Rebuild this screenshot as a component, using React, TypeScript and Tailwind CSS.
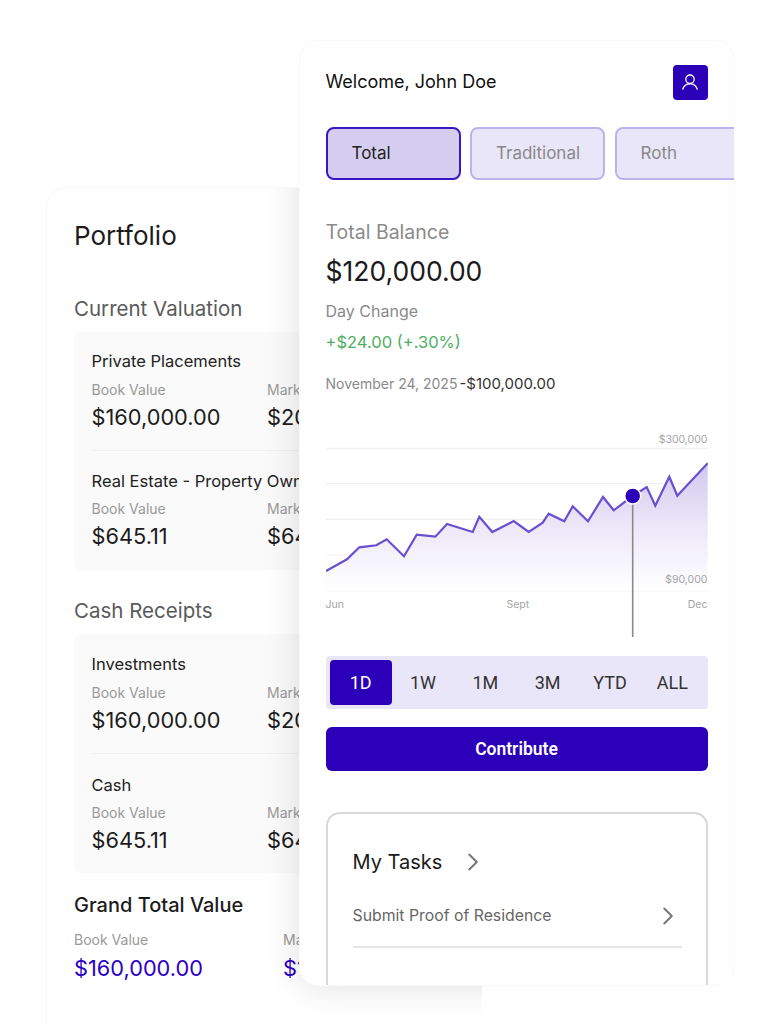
import React from 'react';
import { ChevronRight } from 'lucide-react';

const chartPoints = [
  [0, 139], [21, 127.3], [33.3, 115.3], [50.3, 113.3], [60.7, 107.3], [78, 124.3], [90.7, 102.7],
  [109.3, 104.7], [121, 92], [146.7, 100], [153.3, 84.7], [166.3, 100], [187.7, 89], [202.7, 100],
  [216.7, 90.7], [222.7, 81.7], [238.3, 89.3], [246.7, 74.3], [262, 89.3], [277, 65], [287.7, 78.3],
  [306.7, 64], [320.7, 55], [329.3, 73.7], [343.3, 44.7], [351.3, 63.7], [381.7, 31.3],
];
const gridLines = [16.3, 51.7, 87.3, 123, 158.7];
const ranges = ['1D', '1W', '1M', '3M', 'YTD', 'ALL'];

function Holding({ title, book, market, tight }: { title: string; book: string; market: string; tight?: boolean }) {
  return (
    <div className="pl-[17.5px]">
      <div className="text-[16.5px] leading-[20px] text-[#222]">{title}</div>
      <div className={tight ? 'mt-[8px] flex' : 'mt-[9px] flex'}>
        <div className="w-[175.5px] shrink-0">
          <div className="text-[14px] leading-[20px] text-[#999]">Book Value</div>
          <div className="mt-[3px] text-[21.75px] leading-[28px] text-[#1c1c1c]">{book}</div>
        </div>
        <div className="shrink-0">
          <div className="text-[14px] leading-[20px] text-[#999]">Market Value</div>
          <div className="mt-[3px] text-[21.75px] leading-[28px] text-[#1c1c1c]">{market}</div>
        </div>
      </div>
    </div>
  );
}

function PortfolioCard() {
  return (
    <div className="absolute left-[46px] top-[187px] h-[837px] w-[436px] overflow-hidden rounded-t-[20px] border-l border-t border-[#f8f8f8] bg-white pl-[27px] pt-[30px]">
      <div className="whitespace-nowrap text-[26px] leading-[36px] text-[#1c1c1c]">Portfolio</div>
      <div className="mt-[41px] text-[20.5px] leading-[28px] text-[#5a5a5a]">Current Valuation</div>
      <div className="mt-[9px] h-[238px] w-[360px] overflow-hidden rounded-[6px] bg-[#fafafa] pt-[19px] whitespace-nowrap">
        <Holding title="Private Placements" book="$160,000.00" market="$200,000.00" />
        <div className="ml-[17px] mt-[19px] h-px bg-[#f2f2f2]" />
        <div className="mt-[20px]">
          <Holding title="Real Estate - Property Owner" book="$645.11" market="$645.11" tight />
        </div>
      </div>
      <div className="mt-[27px] text-[20.5px] leading-[28px] text-[#5a5a5a]">Cash Receipts</div>
      <div className="mt-[9px] h-[239px] w-[360px] overflow-hidden rounded-[6px] bg-[#fafafa] pt-[20px] whitespace-nowrap">
        <Holding title="Investments" book="$160,000.00" market="$200,000.00" />
        <div className="ml-[17px] mt-[19px] h-px bg-[#f2f2f2]" />
        <div className="mt-[21px]">
          <Holding title="Cash" book="$645.11" market="$645.11" tight />
        </div>
      </div>
      <div className="mt-[18px] text-[20px] font-medium leading-[28px] text-[#1c1c1c]">Grand Total Value</div>
      <div className="mt-[11px] flex whitespace-nowrap">
        <div className="w-[209px] shrink-0">
          <div className="text-[14px] leading-[20px] text-[#999]">Book Value</div>
          <div className="mt-[3px] text-[21.75px] leading-[30px] text-[#2a00c4]">$160,000.00</div>
        </div>
        <div className="shrink-0">
          <div className="text-[14px] leading-[20px] text-[#999]">Market Value</div>
          <div className="mt-[3px] text-[21.75px] leading-[30px] text-[#2a00c4]">$160,000.00</div>
        </div>
      </div>
      {/* the front card's shadow only shows where it falls on this card */}
      <div className="absolute left-[252px] top-[-148px] h-[946px] w-[436px] rounded-[20px] shadow-[0_0_36px_rgba(0,0,0,0.13)]" />
    </div>
  );
}

function BalanceChart() {
  const line = chartPoints.map(([x, y]) => `${x},${y}`).join(' ');
  return (
    <div className="relative mt-[36px] h-[208px] w-[382px]">
      <svg viewBox="0 0 382 208" className="h-[208px] w-[382px]">
        <defs>
          <linearGradient id="chartFill" x1="0" y1="0" x2="0" y2="1">
            <stop offset="0" stopColor="#d0c8ef" />
            <stop offset="0.5" stopColor="#ece8f8" />
            <stop offset="1" stopColor="#ffffff" />
          </linearGradient>
        </defs>
        {gridLines.map((y) => (
          <line key={y} x1="0" x2="382" y1={y} y2={y} stroke="#f0f0f0" strokeWidth="1.2" />
        ))}
        <polygon points={`0,158.7 ${line} 381.7,158.7`} fill="url(#chartFill)" />
        <polyline points={line} fill="none" stroke="#6a4fd0" strokeWidth="2.2" strokeLinejoin="miter" />
        <line x1="306.7" x2="306.7" y1="64" y2="205" stroke="#8a8a8a" strokeWidth="1.6" />
        <circle cx="306.7" cy="64" r="8" fill="#2c00b8" stroke="#ffffff" strokeWidth="1.5" />
      </svg>
      <span className="absolute right-0 top-[1px] text-[10.5px] leading-[14px] text-[#a5a5a5]">$300,000</span>
      <span className="absolute right-0 top-[141px] text-[10.5px] leading-[14px] text-[#a5a5a5]">$90,000</span>
      <span className="absolute left-0 top-[166px] text-[10.5px] leading-[14px] text-[#a5a5a5]">Jun</span>
      <span className="absolute left-[181px] top-[166px] text-[10.5px] leading-[14px] text-[#a5a5a5]">Sept</span>
      <span className="absolute right-0 top-[166px] text-[10.5px] leading-[14px] text-[#a5a5a5]">Dec</span>
    </div>
  );
}

function AccountCard() {
  return (
    <div className="absolute left-[299px] top-[40px] h-[946px] w-[436px] overflow-hidden rounded-[20px] border border-[#fafafa] bg-white pl-[25.5px] pt-[23px]">
      <div className="flex w-[382px] items-center justify-between">
        <div className="text-[18px] leading-[36px] text-[#111]">Welcome, John Doe</div>
        <div className="flex h-[35px] w-[35px] items-center justify-center rounded-[4px] bg-[#2c00b8]">
          <svg viewBox="0 0 18 18" className="h-[18px] w-[18px]" fill="none" stroke="#ffffff" strokeWidth="1.3" strokeLinecap="round">
            <circle cx="9" cy="6.2" r="4.2" />
            <path d="M1.8 16.2c.9-3.2 3.6-5.4 7.2-5.4s6.3 2.2 7.2 5.4" />
          </svg>
        </div>
      </div>
      <div className="mt-[27px] flex gap-[9.5px]">
        <div className="flex h-[53px] w-[135px] shrink-0 items-center rounded-[8px] border-2 border-[#3a17c4] bg-[#d4cdf0] pl-[24px] text-[17px] text-[#222]">Total</div>
        <div className="flex h-[53px] w-[135px] shrink-0 items-center rounded-[8px] border-2 border-[#bdb2ec] bg-[#eae6f9] pl-[24px] text-[17px] text-[#888]">Traditional</div>
        <div className="flex h-[53px] w-[135px] shrink-0 items-center rounded-[8px] border-2 border-[#bdb2ec] bg-[#eae6f9] pl-[24px] text-[17px] text-[#888]">Roth</div>
      </div>
      <div className="mt-[38px] text-[19.5px] leading-[28px] text-[#8a8a8a]">Total Balance</div>
      <div className="mt-[8px] text-[26.5px] leading-[34px] text-[#1a1a1a]">$120,000.00</div>
      <div className="mt-[11px] text-[16px] leading-[24px] text-[#8a8a8a]">Day Change</div>
      <div className="mt-[7px] text-[16.5px] leading-[24px] text-[#4caf62]">+$24.00 (+.30%)</div>
      <div className="mt-[18px] flex items-center gap-[2px] leading-[24px]">
        <span className="text-[14px] text-[#8a8a8a]">November 24, 2025</span>
        <span className="text-[15px] text-[#333]">-$100,000.00</span>
      </div>
      <BalanceChart />
      <div className="mt-[16px] grid h-[53px] w-[382px] grid-cols-6 items-center rounded-[4px] bg-[#eae6f9] px-[4px] font-['Roboto',sans-serif] text-[18px] text-[#333]">
        {ranges.map((range, index) => (
          <div
            key={range}
            className={
              index === 0
                ? 'flex h-[45px] items-center justify-center rounded-[4px] bg-[#2c00b8] text-white'
                : 'flex h-[45px] items-center justify-center'
            }
          >
            {range}
          </div>
        ))}
      </div>
      <div className="mt-[18px] flex h-[44px] w-[382px] items-center justify-center rounded-[6px] bg-[#2c00b8] font-['Roboto',sans-serif] text-[17.5px] font-semibold text-white">
        Contribute
      </div>
      <div className="mt-[41px] h-[200px] w-[382px] rounded-t-[14px] border-x-2 border-t-2 border-[#d8d8d8] pl-[25px] pt-[30px]">
        <div className="flex items-center">
          <span className="text-[20px] leading-[36px] text-[#1a1a1a]">My Tasks</span>
          <ChevronRight size={30} strokeWidth={1.6} className="ml-[16px] text-[#777]" />
        </div>
        <div className="mt-[20px] flex h-[32px] w-[329px] items-center justify-between">
          <span className="text-[15.8px] text-[#666]">Submit Proof of Residence</span>
          <ChevronRight size={30} strokeWidth={1.6} className="-mr-[1px] text-[#777]" />
        </div>
        <div className="mt-[14px] h-[2px] w-[329px] bg-[#e6e6e6]" />
      </div>
    </div>
  );
}

export default function App() {
  return (
    <div className="relative h-[1024px] w-[779px] overflow-hidden bg-white font-['Inter',sans-serif]">
      <PortfolioCard />
      <AccountCard />
    </div>
  );
}
